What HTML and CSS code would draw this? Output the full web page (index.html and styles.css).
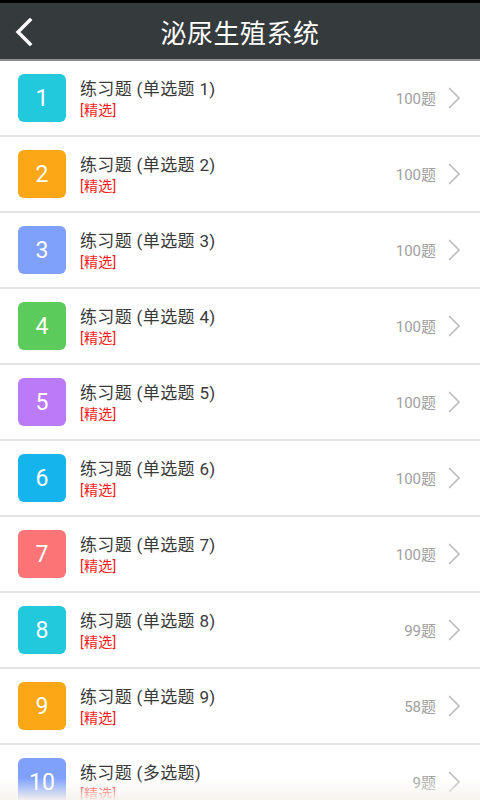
FILE: index.html
```html
<html>

<head>
  <meta charset="utf-8">
  <title>泌尿生殖系统</title>
  <link rel="stylesheet" href="styles.css">
</head>

<body>
  <div class="statusbar"></div>
  <div class="topbar">
    <a href="#" class="back">
      <svg width="20" height="28" viewBox="0 0 20 28">
        <polyline points="16,2 4,14 16,26" fill="none" stroke="#fff" stroke-width="3.4" stroke-linecap="square" />
      </svg>
    </a>
    <h1>泌尿生殖系统</h1>
  </div>

  <ul class="list">
    <li class="row">
      <span class="num c1">1</span>
      <div class="info"><div class="name">练习题 (单选题 1)</div><div class="tag">[精选]</div></div>
      <span class="count">100题</span>
      <svg class="arrow" width="12" height="22" viewBox="0 0 12 22"><polyline points="1,1 11,11 1,21" /></svg>
    </li>
    <li class="row">
      <span class="num c2">2</span>
      <div class="info"><div class="name">练习题 (单选题 2)</div><div class="tag">[精选]</div></div>
      <span class="count">100题</span>
      <svg class="arrow" width="12" height="22" viewBox="0 0 12 22"><polyline points="1,1 11,11 1,21" /></svg>
    </li>
    <li class="row">
      <span class="num c3">3</span>
      <div class="info"><div class="name">练习题 (单选题 3)</div><div class="tag">[精选]</div></div>
      <span class="count">100题</span>
      <svg class="arrow" width="12" height="22" viewBox="0 0 12 22"><polyline points="1,1 11,11 1,21" /></svg>
    </li>
    <li class="row">
      <span class="num c4">4</span>
      <div class="info"><div class="name">练习题 (单选题 4)</div><div class="tag">[精选]</div></div>
      <span class="count">100题</span>
      <svg class="arrow" width="12" height="22" viewBox="0 0 12 22"><polyline points="1,1 11,11 1,21" /></svg>
    </li>
    <li class="row">
      <span class="num c5">5</span>
      <div class="info"><div class="name">练习题 (单选题 5)</div><div class="tag">[精选]</div></div>
      <span class="count">100题</span>
      <svg class="arrow" width="12" height="22" viewBox="0 0 12 22"><polyline points="1,1 11,11 1,21" /></svg>
    </li>
    <li class="row">
      <span class="num c6">6</span>
      <div class="info"><div class="name">练习题 (单选题 6)</div><div class="tag">[精选]</div></div>
      <span class="count">100题</span>
      <svg class="arrow" width="12" height="22" viewBox="0 0 12 22"><polyline points="1,1 11,11 1,21" /></svg>
    </li>
    <li class="row">
      <span class="num c7">7</span>
      <div class="info"><div class="name">练习题 (单选题 7)</div><div class="tag">[精选]</div></div>
      <span class="count">100题</span>
      <svg class="arrow" width="12" height="22" viewBox="0 0 12 22"><polyline points="1,1 11,11 1,21" /></svg>
    </li>
    <li class="row">
      <span class="num c1">8</span>
      <div class="info"><div class="name">练习题 (单选题 8)</div><div class="tag">[精选]</div></div>
      <span class="count">99题</span>
      <svg class="arrow" width="12" height="22" viewBox="0 0 12 22"><polyline points="1,1 11,11 1,21" /></svg>
    </li>
    <li class="row">
      <span class="num c2">9</span>
      <div class="info"><div class="name">练习题 (单选题 9)</div><div class="tag">[精选]</div></div>
      <span class="count">58题</span>
      <svg class="arrow" width="12" height="22" viewBox="0 0 12 22"><polyline points="1,1 11,11 1,21" /></svg>
    </li>
    <li class="row">
      <span class="num c3">10</span>
      <div class="info"><div class="name">练习题 (多选题)</div><div class="tag">[精选]</div></div>
      <span class="count">9题</span>
      <svg class="arrow" width="12" height="22" viewBox="0 0 12 22"><polyline points="1,1 11,11 1,21" /></svg>
    </li>
  </ul>

  <div class="fade"></div>
</body>

</html>
```

FILE: styles.css
```css
body {
  margin: 0;
  width: 480px;
  height: 800px;
  overflow: hidden;
  background: #fff;
  font-family: Roboto, "Noto Sans CJK SC", sans-serif;
}

.statusbar {
  height: 3px;
  background: #000;
}

.topbar {
  position: relative;
  height: 56px;
  background: #353a3d;
  border-bottom: 2px solid #8c8f91;
  display: flex;
  align-items: center;
  justify-content: center;
}

.topbar h1 {
  margin: 0;
  color: #fff;
  font-size: 26px;
  font-weight: normal;
  letter-spacing: 0.5px;
}

/* back button sits over the bar */
.back {
  position: absolute;
  left: 14px;
  top: 15px;
  display: flex;
}

.list {
  list-style: none;
  margin: 0;
  padding: 0;
}

.row {
  height: 74px;
  border-bottom: 2px solid #e4e4e4;
  display: flex;
  align-items: center;
  padding: 0 20px 0 18px;
}

.num {
  width: 48px;
  height: 48px;
  border-radius: 6px;
  color: #fff;
  font-size: 23px;
  display: flex;
  align-items: center;
  justify-content: center;
  flex-shrink: 0;
}

.c1 { background: #22c8dc; }
.c2 { background: #fba716; }
.c3 { background: #7fa1fc; }
.c4 { background: #5bcb5c; }
.c5 { background: #bb7bf9; }
.c6 { background: #16b4ec; }
.c7 { background: #fb7576; }

.info {
  flex: 1;
  margin-left: 14px;
  padding-top: 1px;
}

.name {
  font-size: 17px;
  line-height: 22px;
  letter-spacing: 0.35px;
  color: #3a3a3a;
}

.tag {
  font-size: 14px;
  line-height: 20px;
  letter-spacing: 0.3px;
  color: #f51b1b;
}

.count {
  font-size: 15px;
  color: #a0a0a0;
  margin-right: 12px;
  margin-bottom: 2px;
}

.arrow polyline {
  fill: none;
  stroke: #bdbdbd;
  stroke-width: 1.6;
}

/* fade over the bottom of the list */
.fade {
  position: fixed;
  left: 0;
  right: 0;
  bottom: 0;
  height: 22px;
  background: linear-gradient(rgba(247, 244, 238, 0), rgba(247, 244, 238, 0.95));
  pointer-events: none;
}
```
